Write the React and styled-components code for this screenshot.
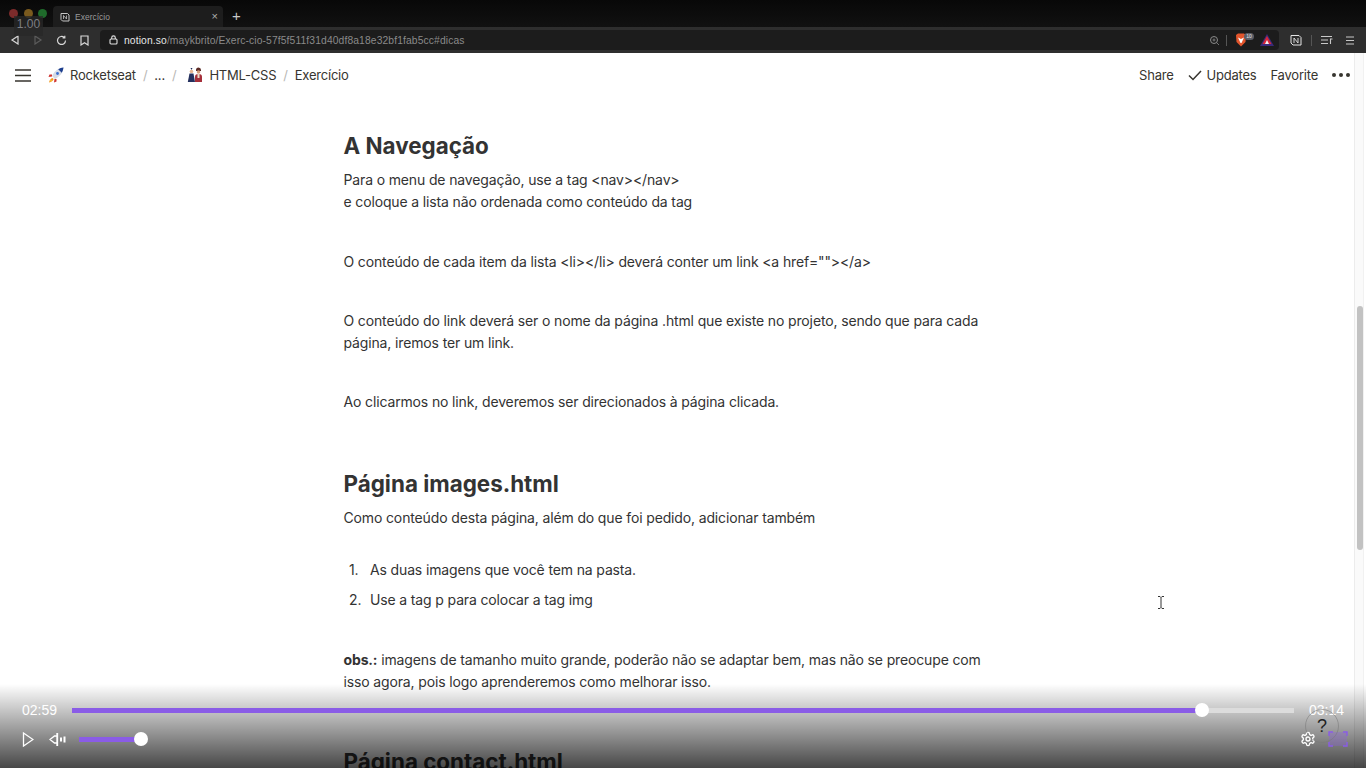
import React from 'react'
import styled, { createGlobalStyle } from 'styled-components'

const GlobalStyle = createGlobalStyle`
  html, body {
    margin: 0;
    padding: 0;
    background: #fff;
  }
  body {
    font-family: Inter, "Noto Sans", "Liberation Sans", sans-serif;
  }
`

const Screen = styled.div`
  position: relative;
  width: 1366px;
  height: 768px;
  overflow: hidden;
  display: flex;
  flex-direction: column;
  background: #fff;
`

/* browser chrome */
const TabStrip = styled.div`
  height: 27px;
  background: linear-gradient(#080808, #111);
  display: flex;
  align-items: flex-end;
  position: relative;
  flex-shrink: 0;
`

const Lights = styled.div`
  width: 53px;
  padding: 0 0 9px 9px;
  box-sizing: border-box;
  display: flex;
  gap: 5.5px;
  align-self: flex-end;
`

const Light = styled.span`
  width: 9px;
  height: 9px;
  border-radius: 50%;
  background: ${p => p.$color};
`

const SpeedBadge = styled.div`
  position: absolute;
  left: 14px;
  top: 16px;
  width: 29px;
  height: 20px;
  background: rgba(40, 40, 40, 0.75);
  color: #7d7f84;
  font: 12px/16px "Liberation Sans", sans-serif;
  text-align: center;
  z-index: 2;
`

const Tab = styled.div`
  width: 170px;
  height: 21px;
  background: #1d1d1d;
  border-radius: 4px 4px 0 0;
  display: flex;
  align-items: center;
  padding: 0 5px 0 7px;
  box-sizing: border-box;
  gap: 5px;
`

const TabTitle = styled.span`
  flex: 1;
  color: #9a9a9a;
  font: 8.5px "Liberation Sans", sans-serif;
`

const TabClose = styled.span`
  color: #b0b0b0;
  font: 11px/11px "Liberation Sans", sans-serif;
`

const NewTab = styled.span`
  margin: 0 0 4px 9px;
  color: #c9c9c9;
  font: 15px/15px "Liberation Sans", sans-serif;
`

const AddressRow = styled.div`
  height: 26px;
  background: #2e2e2e;
  display: flex;
  align-items: center;
  padding-left: 10px;
  flex-shrink: 0;
`

const NavIcons = styled.div`
  width: 90px;
  display: flex;
  align-items: center;
  gap: 13px;
  color: #d8d8d8;
`

const UrlBar = styled.div`
  width: 1179px;
  height: 20px;
  background: #1c1c1c;
  border-radius: 4px;
  display: flex;
  align-items: center;
  padding: 0 5px 0 9px;
  box-sizing: border-box;
  color: #8a8a8a;
  font: 10.3px "Liberation Sans", sans-serif;
  letter-spacing: 0.12px;
`

const UrlHost = styled.b`
  color: #e6e6e6;
  font-weight: 400;
`

const UrlRight = styled.div`
  margin-left: auto;
  display: flex;
  align-items: center;
  gap: 6px;
`

const Sep = styled.span`
  width: 1px;
  height: 11px;
  background: #555;
`

const BraveBadge = styled.span`
  position: absolute;
  left: 9px;
  top: 0;
  width: 10px;
  height: 7px;
  border-radius: 4px;
  background: #5a5d66;
  color: #e4e4e4;
  font: 5px/7px "Liberation Sans", sans-serif;
  letter-spacing: 0;
  text-align: center;
`

const Brave = styled.span`
  position: relative;
  display: block;
  width: 19px;
  height: 14px;
  margin: 0 0 0 2px;
`

const ExtIcons = styled.div`
  margin-left: 11px;
  display: flex;
  align-items: center;
  gap: 9px;
  color: #c8c8c8;
`

/* notion top bar */
const TopBar = styled.header`
  height: 44px;
  background: #fff;
  display: flex;
  align-items: center;
  padding: 0 16px 0 15px;
  color: #37352f;
  font-size: 13px;
  letter-spacing: -0.22px;
  flex-shrink: 0;
`

const Crumbs = styled.nav`
  margin-left: 17px;
  display: flex;
  align-items: center;
`

const Crumb = styled.span`
  display: flex;
  align-items: center;
  gap: 6px;
`

const Slash = styled.span`
  color: #b9b8b5;
  margin: 0 7px;
`

const Actions = styled.div`
  margin-left: auto;
  display: flex;
  align-items: center;
  gap: 14px;
`

const Action = styled.span`
  display: flex;
  align-items: center;
  gap: 5px;
`

/* page body */
const Page = styled.main`
  flex: 1;
  padding: 0 0 0 343.5px;
  width: 640px;
  color: #333;
  font-size: 14px;
  letter-spacing: -0.14px;
  line-height: 22px;
`

const Heading = styled.h2`
  margin: ${p => p.$top}px 0 0;
  font-size: 22.4px;
  line-height: 30px;
  font-weight: 700;
  letter-spacing: 0;
  color: #333;
`

const Para = styled.p`
  margin: ${p => p.$top}px 0 0;
`

const Steps = styled.ol`
  list-style: none;
  margin: 30px 0 0;
  padding: 0;
`

const Step = styled.li`
  display: flex;
  height: 22px;
  margin-bottom: 8px;
`

const StepNum = styled.span`
  width: 26.5px;
  padding-left: 5.5px;
  box-sizing: border-box;
`

const ScrollTrack = styled.div`
  position: absolute;
  left: 1354px;
  top: 53px;
  bottom: 0;
  width: 10px;
  background: #fafafa;
  border-left: 1px solid #ececec;
  border-right: 1px solid #f1f1f1;
  box-sizing: border-box;
`

const ScrollThumb = styled.div`
  position: absolute;
  left: 2px;
  top: 253px;
  width: 6px;
  height: 244px;
  border-radius: 3px;
  background: #c2c2c2;
`

const TextCursor = styled.svg`
  position: absolute;
  left: 1157px;
  top: 596px;
`

/* video player overlay */
const Player = styled.div`
  position: absolute;
  left: 0;
  right: 0;
  bottom: 0;
  height: 84px;
  background: linear-gradient(rgba(0, 0, 0, 0), rgba(0, 0, 0, 0.72));
  padding: 16px 22px 0;
  box-sizing: border-box;
  color: #fff;
`

const TimeRow = styled.div`
  display: flex;
  align-items: center;
  gap: 15px;
  height: 20px;
  font: 14px "Liberation Sans", sans-serif;
`

const Track = styled.div`
  flex: 1;
  height: 5px;
  background: #dcdcdc;
  position: relative;
`

const Fill = styled.div`
  height: 100%;
  background: #8a5ce6;
  position: relative;
`

const Knob = styled.span`
  position: absolute;
  right: -7px;
  top: -4.5px;
  width: 14px;
  height: 14px;
  border-radius: 50%;
  background: #fff;
`

const Controls = styled.div`
  margin-top: 8px;
  display: flex;
  align-items: center;
  height: 22px;
  margin-right: -4px;
`

const VolumeTrack = styled.div`
  margin-left: 12px;
  width: 62px;
  height: 5px;
`

const RightControls = styled.div`
  margin-left: auto;
  display: flex;
  align-items: center;
  gap: 12px;
`

const HelpButton = styled.div`
  position: absolute;
  left: 1305px;
  top: 709px;
  width: 34px;
  height: 34px;
  border-radius: 50%;
  border: 1px solid rgba(120, 120, 120, 0.55);
  box-sizing: border-box;
  color: #222;
  font: 18px/32px "Liberation Sans", sans-serif;
  text-align: center;
`

const Menu = () => (
  <svg width="16" height="13" viewBox="0 0 16 13" stroke="#37352f" strokeWidth="1.4">
    <path d="M0 1h16M0 6.5h16M0 12h16" />
  </svg>
)

const Rocket = () => (
  <svg width="16" height="16" viewBox="0 0 16 16">
    <path d="M4 7.500H1.500L.5 10l3.500-.5zM8.500 12v2.500L6 15.500l.5-3.500z" fill="#d0322f" />
    <path d="M4.500 11C2.800 11.300 1.500 13 1 15.500c2.500-.4 4.200-1.800 4.600-3.400z" fill="#f29a1f" />
    <path d="M3 12.500c-.5.600-.8 1.300-1 2 .8-.2 1.400-.6 1.900-1.100z" fill="#fbd13c" />
    <path d="M15.500.5C10.500 1 6.500 3.800 4 9l3 3c5.200-2.500 8-6.500 8.500-11.500z" fill="#d6dbe6" />
    <path d="M15.500.5c-2 .2-3.700.8-5.300 1.700l3.600 3.600c.9-1.600 1.500-3.300 1.700-5.300z" fill="#1d3f8f" />
    <circle cx="9.500" cy="6.500" r="1.400" fill="#3a6fd0" />
  </svg>
)

const People = () => (
  <svg width="16" height="16" viewBox="0 0 16 16" style={{ marginLeft: 4 }}>
    <path d="M3.500 1h2l-1 2z" fill="#1f2c5c" />
    <circle cx="4.500" cy="4.500" r="1.800" fill="#e5b48f" />
    <path d="M.8 15l1.700-8.500h4L8 15z" fill="#24305e" />
    <path d="M9 3a2.500 2.500 0 0 1 5 0v1H9z" fill="#5b2a24" />
    <circle cx="11.500" cy="5" r="1.800" fill="#d49b78" />
    <path d="M8 15V9.500C8 7.800 9.500 7 11.500 7s3.500.8 3.500 2.500V15z" fill="#a52f3a" />
    <path d="M10.500 7h2v4h-2z" fill="#e9d9c5" />
  </svg>
)

const App = () => (
  <Screen>
    <GlobalStyle />
    <TabStrip>
      <Lights>
        <Light $color="#7c2b2b" />
        <Light $color="#7a5a1e" />
        <Light $color="#1f6b2b" />
      </Lights>
      <SpeedBadge>1.00</SpeedBadge>
      <Tab>
        <svg width="10" height="10" viewBox="0 0 10 10" fill="none" stroke="#c4c4c4">
          <path d="M1 1.500h6.500L9 3v6H2.500L1 7.500z" />
          <path d="M3.500 7V3.500L6.500 7V3.500" strokeWidth=".8" />
        </svg>
        <TabTitle>Exercício</TabTitle>
        <TabClose>×</TabClose>
      </Tab>
      <NewTab>+</NewTab>
    </TabStrip>
    <AddressRow>
      <NavIcons>
        <svg width="10" height="10" viewBox="0 0 10 10" fill="none" stroke="currentColor" strokeWidth="1.2">
          <path d="M8 1L2 5l6 4z" />
        </svg>
        <svg width="10" height="10" viewBox="0 0 10 10" fill="none" stroke="#5c5c5c" strokeWidth="1.2">
          <path d="M2 1l6 4-6 4z" />
        </svg>
        <svg width="11" height="11" viewBox="0 0 11 11" fill="none" stroke="currentColor" strokeWidth="1.2">
          <path d="M9.500 5.500a4 4 0 1 1-1.200-2.900M8.800 .8v2.200H6.600" />
        </svg>
        <svg width="9" height="11" viewBox="0 0 9 11" fill="none" stroke="currentColor" strokeWidth="1.200">
          <path d="M1 1h7v9L4.500 7.800 1 10z" />
        </svg>
      </NavIcons>
      <UrlBar>
        <svg width="9" height="10" viewBox="0 0 9 10" fill="none" stroke="#e0e0e0" strokeWidth="1.100" style={{ marginRight: 6 }}>
          <rect x="1" y="4" width="7" height="5" rx="1" />
          <path d="M2.700 4V2.700a1.800 1.800 0 0 1 3.600 0V4" />
        </svg>
        <UrlHost>notion.so</UrlHost>/maykbrito/Exerc-cio-57f5f511f31d40df8a18e32bf1fab5cc#dicas
        <UrlRight>
          <svg width="11" height="11" viewBox="0 0 11 11" fill="none" stroke="#8a8a8a">
            <circle cx="5" cy="5" r="3.500" />
            <path d="M7.500 7.500L10 10M3.500 5h3M5 3.500v3" strokeWidth=".8" />
          </svg>
          <Sep />
          <Brave>
            <svg width="12" height="14" viewBox="0 0 12 14">
              <path d="M1 2L3 .5h6L11 2l-.5 7L6 13.500 1.500 9z" fill="#e2552c" />
              <path d="M3 4.500l3 1.500 3-1.500L6.500 10h-1z" fill="#fff" />
            </svg>
            <BraveBadge>10</BraveBadge>
          </Brave>
          <svg width="14" height="12" viewBox="0 0 14 12">
            <path d="M7 0l7 12H0z" fill="#3a2a78" />
            <path d="M7 2l4.500 8h-9z" fill="#d8263a" />
            <path d="M7 6l2 4H5z" fill="#f2f2f2" />
          </svg>
        </UrlRight>
      </UrlBar>
      <ExtIcons>
        <svg width="12" height="12" viewBox="0 0 12 12" fill="none" stroke="#e5e5e5">
          <path d="M1 1.500h8L11 3.500V11H3L1 9z" />
          <path d="M4 9V4l4 5V4" strokeWidth=".9" />
        </svg>
        <Sep />
        <svg width="12" height="10" viewBox="0 0 12 10" fill="none" stroke="currentColor" strokeWidth="1.100">
          <path d="M0 1.500h11M0 5h7M0 8.500h7M9.500 9V4h2" />
        </svg>
        <svg width="8" height="9" viewBox="0 0 8 9" stroke="currentColor" strokeWidth="1.100" style={{ marginLeft: 4 }}>
          <path d="M0 1h8M0 4.500h8M0 8h8" />
        </svg>
      </ExtIcons>
    </AddressRow>

    <TopBar>
      <Menu />
      <Crumbs>
        <Crumb><Rocket />Rocketseat</Crumb>
        <Slash>/</Slash>
        <Crumb>...</Crumb>
        <Slash>/</Slash>
        <Crumb><People />HTML-CSS</Crumb>
        <Slash>/</Slash>
        <Crumb>Exercício</Crumb>
      </Crumbs>
      <Actions>
        <Action>Share</Action>
        <Action>
          <svg width="14" height="11" viewBox="0 0 14 11" fill="none" stroke="#37352f" strokeWidth="1.500">
            <path d="M1 5.500L5 9.500 13 1" />
          </svg>
          Updates
        </Action>
        <Action>Favorite</Action>
        <svg width="18" height="4" viewBox="0 0 18 4" fill="#37352f">
          <circle cx="2" cy="2" r="2" />
          <circle cx="9" cy="2" r="2" />
          <circle cx="16" cy="2" r="2" />
        </svg>
      </Actions>
    </TopBar>

    <Page>
      <Heading $top={34}>A Navegação</Heading>
      <Para $top={8}>Para o menu de navegação, use a tag &lt;nav&gt;&lt;/nav&gt;<br />e coloque a lista não ordenada como conteúdo da tag</Para>
      <Para $top={38}>O conteúdo de cada item da lista &lt;li&gt;&lt;/li&gt; deverá conter um link &lt;a href=""&gt;&lt;/a&gt;</Para>
      <Para $top={37}>O conteúdo do link deverá ser o nome da página .html que existe no projeto, sendo que para cada página, iremos ter um link.</Para>
      <Para $top={37}>Ao clicarmos no link, deveremos ser direcionados à página clicada.</Para>
      <Heading $top={56}>Página images.html</Heading>
      <Para $top={8}>Como conteúdo desta página, além do que foi pedido, adicionar também</Para>
      <Steps>
        <Step><StepNum>1.</StepNum>As duas imagens que você tem na pasta.</Step>
        <Step><StepNum>2.</StepNum>Use a tag p para colocar a tag img</Step>
      </Steps>
      <Para $top={38}><strong>obs.:</strong> imagens de tamanho muito grande, poderão não se adaptar bem, mas não se preocupe com isso agora, pois logo aprenderemos como melhorar isso.</Para>
      <Heading $top={54}>Página contact.html</Heading>
    </Page>

    <ScrollTrack><ScrollThumb /></ScrollTrack>
    <TextCursor width="8" height="13" viewBox="0 0 8 13" fill="none" stroke="#333" strokeWidth="1">
      <path d="M1 .5h2l1 1 1-1h2M4 1.500v10M1 12.500h2l1-1 1 1h2" />
    </TextCursor>

    <Player>
      <TimeRow>
        <span>02:59</span>
        <Track>
          <Fill style={{ width: `${(1130 / 1222) * 100}%` }}><Knob /></Fill>
        </Track>
        <span>03:14</span>
      </TimeRow>
      <Controls>
        <svg width="12" height="15" viewBox="0 0 12 15" fill="none" stroke="#fff" strokeWidth="1.300">
          <path d="M1.500 1L11 7.500 1.500 14z" />
        </svg>
        <svg width="18" height="15" viewBox="0 0 18 15" fill="none" stroke="#fff" strokeWidth="1.300" style={{ marginLeft: 15 }}>
          <path d="M1 7.500L5.500 4H8V1L8 14V11H5.500z" />
          <path d="M8.500 1v13" />
          <path d="M12 5.500v4M15.500 4.500v6" strokeWidth="2" />
        </svg>
        <VolumeTrack>
          <Fill><Knob /></Fill>
        </VolumeTrack>
        <RightControls>
          <svg width="16" height="16" viewBox="0 0 24 24" fill="none" stroke="#fff" strokeWidth="2" strokeLinecap="round" strokeLinejoin="round">
            <path d="M12.220 2h-.440a2 2 0 0 0-2 2v.180a2 2 0 0 1-1 1.730l-.430.250a2 2 0 0 1-2 0l-.150-.080a2 2 0 0 0-2.730.730l-.220.380a2 2 0 0 0 .730 2.730l.150.100a2 2 0 0 1 1 1.720v.510a2 2 0 0 1-1 1.740l-.150.090a2 2 0 0 0-.730 2.730l.220.380a2 2 0 0 0 2.730.730l.150-.080a2 2 0 0 1 2 0l.430.250a2 2 0 0 1 1 1.730V20a2 2 0 0 0 2 2h.440a2 2 0 0 0 2-2v-.180a2 2 0 0 1 1-1.730l.430-.250a2 2 0 0 1 2 0l.150.080a2 2 0 0 0 2.730-.730l.220-.390a2 2 0 0 0-.730-2.730l-.150-.080a2 2 0 0 1-1-1.740v-.500a2 2 0 0 1 1-1.740l.150-.090a2 2 0 0 0 .730-2.730l-.220-.380a2 2 0 0 0-2.730-.730l-.150.080a2 2 0 0 1-2 0l-.430-.250a2 2 0 0 1-1-1.730V4a2 2 0 0 0-2-2z" />
            <circle cx="12" cy="12" r="3" />
          </svg>
          <svg width="20" height="16" viewBox="0 0 20 16" fill="none" stroke="#8a5ce6" strokeWidth="1.400">
            <rect x="1" y="1" width="18" height="14" fill="rgba(138,92,230,.3)" stroke="none" />
            <path d="M1 5V1h4M15 1h4v4M19 11v4h-4M5 15H1v-4" />
          </svg>
        </RightControls>
      </Controls>
    </Player>
    <HelpButton>?</HelpButton>
  </Screen>
)

export default App
